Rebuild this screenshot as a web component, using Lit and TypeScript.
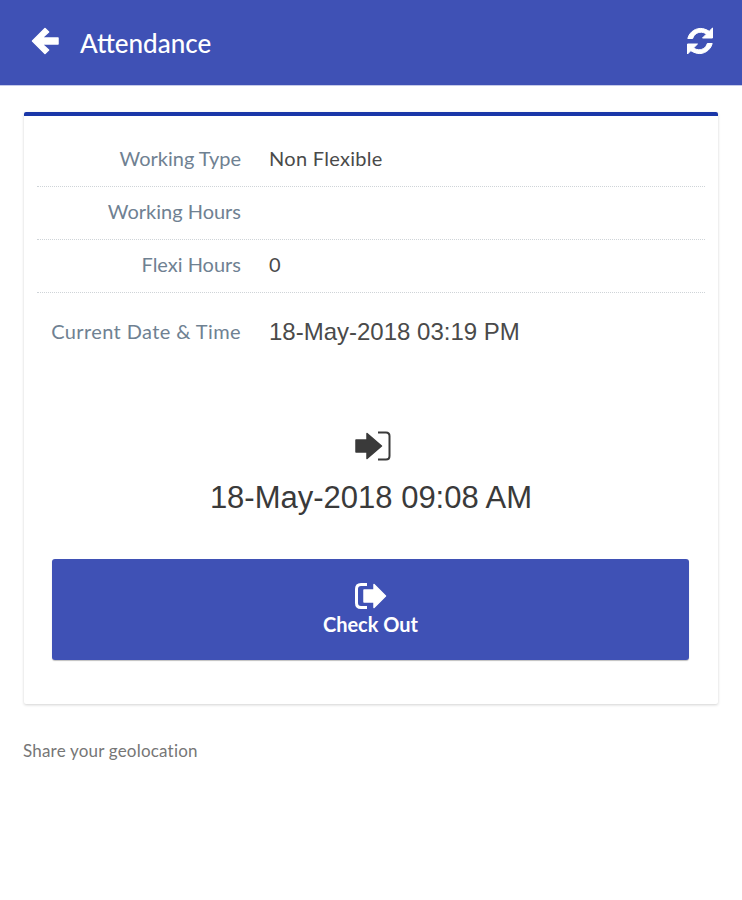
import { LitElement, html, css } from 'lit';
import { customElement } from 'lit/decorators.js';

const rows = [
  { label: 'Working Type', value: 'Non Flexible' },
  { label: 'Working Hours', value: '' },
  { label: 'Flexi Hours', value: '0' },
];

@customElement('app-root')
export class AppRoot extends LitElement {
  static styles = css`
    :host {
      display: block;
      width: 742px;
      min-height: 900px;
      background: #fff;
      font-family: Lato, "Open Sans", sans-serif;
      color: #444;
    }

    .toolbar {
      height: 86px;
      box-sizing: border-box;
      background: #3f51b5;
      border-bottom: 1px solid #c5cae9;
      display: flex;
      align-items: center;
      padding: 0 27px 0 31px;
      color: #fff;
    }

    .toolbar h1 {
      margin: 0 0 0 21px;
      font-size: 26px;
      font-weight: 500;
      flex: 1;
    }

    .toolbar svg {
      margin-top: -3px;
    }

    .card {
      margin: 26px 24px 0;
      height: 592px;
      box-sizing: border-box;
      border-top: 4px solid #1a37a8;
      border-radius: 2px;
      box-shadow: 0 1px 3px rgba(0, 0, 0, 0.18);
      padding: 18px 13px 0;
    }

    .row {
      height: 53px;
      box-sizing: border-box;
      display: flex;
      align-items: center;
      border-bottom: 1px dotted #cfd4d8;
      padding-bottom: 5px;
    }

    .row.plain {
      border-bottom: none;
      height: 80px;
    }

    .label {
      width: 204px;
      text-align: right;
      font-size: 20px;
      color: #6f8192;
    }

    .plain .label {
      letter-spacing: 0.4px;
    }

    .value {
      margin-left: 28px;
      font-size: 20px;
      letter-spacing: 0.3px;
      color: #4a4a4a;
    }

    .value.now {
      font-family: "Liberation Sans", Arial, sans-serif;
      font-size: 24px;
      letter-spacing: 0;
      padding-top: 2px;
    }

    .checkin {
      display: flex;
      flex-direction: column;
      align-items: center;
      margin-top: 58px;
      color: #3a3a3a;
    }

    .checkin svg {
      margin-left: 4px;
    }

    .checkin time {
      font-family: "Liberation Sans", Arial, sans-serif;
      font-size: 31px;
      margin-top: 17px;
      line-height: 40px;
    }

    button {
      display: flex;
      flex-direction: column;
      align-items: center;
      justify-content: center;
      width: 637px;
      height: 101px;
      margin: 41px 0 0 15px;
      border: 0;
      border-radius: 3px;
      background: #3f51b5;
      color: #fff;
      font-family: inherit;
      font-size: 20px;
      font-weight: 700;
      box-shadow: 0 1px 1px rgba(0, 0, 0, 0.25);
    }

    button span {
      margin-top: 3px;
    }

    .geo {
      margin: 36px 0 0 23px;
      font-size: 17px;
      letter-spacing: 0.2px;
      color: #767676;
    }

    svg {
      display: block;
      fill: currentColor;
    }
  `;

  render() {
    return html`
      <header class="toolbar">
        <svg width="28" height="28" viewBox="0 0 28 28">
          <path d="M14 1.5 L17.6 5 L11 11 H27 V17 H11 L17.6 23 L14 26.5 L1.5 14 Z" stroke="currentColor" stroke-width="1.5" stroke-linejoin="round" />
        </svg>
        <h1>Attendance</h1>
        <svg width="30" height="30" viewBox="0 0 30 30">
          <path d="M27.5 2 V12 H17.5 L21.3 8.2 C17.6 5 12 5.8 9.2 9.6 C8.5 10.5 8 11.4 7.7 12.5 H2.8 C4.5 5.8 11 1.5 17.6 2.6 C20 3 22.4 4.2 24.2 5.3 Z" stroke="currentColor" stroke-width="1" stroke-linejoin="round" />
          <path d="M2.5 28 V18 H12.5 L8.7 21.8 C12.4 25 18 24.2 20.8 20.4 C21.5 19.5 22 18.6 22.3 17.5 H27.2 C25.5 24.2 19 28.5 12.4 27.4 C10 27 7.6 25.8 5.8 24.7 Z" stroke="currentColor" stroke-width="1" stroke-linejoin="round" />
        </svg>
      </header>
      <section class="card">
        ${rows.map(
          (r) => html`<div class="row">
            <div class="label">${r.label}</div>
            <div class="value">${r.value}</div>
          </div>`
        )}
        <div class="row plain">
          <div class="label">Current Date &amp; Time</div>
          <div class="value now">18-May-2018 03:19 PM</div>
        </div>
        <div class="checkin">
          <svg width="36" height="30" viewBox="0 0 36 30">
            <path d="M1 9 H12 V2.5 L26.5 15 L12 27.5 V21 H1 Z" stroke="currentColor" stroke-width="1.5" stroke-linejoin="round" />
            <path d="M23 1.5 H31 Q34.5 1.5 34.5 5 V25 Q34.5 28.5 31 28.5 H23" fill="none" stroke="currentColor" stroke-width="2" />
          </svg>
          <time>18-May-2018 09:08 AM</time>
        </div>
        <button>
          <svg width="32" height="26" viewBox="0 0 32 26">
            <path d="M12 1.5 H6 Q1.5 1.5 1.5 6 V20 Q1.5 24.5 6 24.5 H12" fill="none" stroke="currentColor" stroke-width="3" />
            <path d="M9 7 H19 V1.5 L30.5 13 L19 24.5 V19 H9 Z" stroke="currentColor" stroke-width="1.5" stroke-linejoin="round" />
          </svg>
          <span>Check Out</span>
        </button>
      </section>
      <div class="geo">Share your geolocation</div>
    `;
  }
}
